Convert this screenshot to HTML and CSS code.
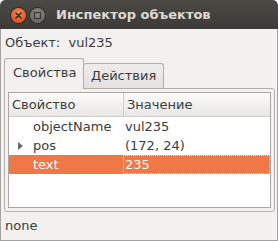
FILE: index.html
```html
<!DOCTYPE html>
<html lang="ru">
<head>
	<meta charset="utf-8">
	<title>Инспектор объектов</title>
	<link rel="stylesheet" href="styles.css">
</head>
<body>
	<div class="window">
		<div class="titlebar">
			<div class="buttons">
				<span class="btn btn-close">
					<svg width="15" height="15" viewBox="0 0 15 15"><path d="M5 5 L10 10 M10 5 L5 10" stroke="#3a2a20" stroke-width="1.6" stroke-linecap="round"/></svg>
				</span>
				<span class="btn btn-max">
					<svg width="15" height="15" viewBox="0 0 15 15"><rect x="4.5" y="4.5" width="6" height="6" fill="none" stroke="#3c3b37" stroke-width="1.3"/></svg>
				</span>
			</div>
			<div class="title">Инспектор объектов</div>
		</div>

		<div class="content">
			<div class="object-line">Объект:&nbsp; vul235</div>

			<div class="tabs">
				<div class="tab active">Свойства</div>
				<div class="tab">Действия</div>
			</div>

			<div class="panel">
				<div class="props">
					<div class="row header">
						<div class="cell name">Свойство</div>
						<div class="cell value">Значение</div>
					</div>
					<div class="row">
						<div class="cell name"><span class="indent"></span>objectName</div>
						<div class="cell value">vul235</div>
					</div>
					<div class="row">
						<div class="cell name"><span class="indent"><span class="arrow"></span></span>pos</div>
						<div class="cell value">(172, 24)</div>
					</div>
					<div class="row selected">
						<div class="cell name"><span class="indent"></span>text</div>
						<div class="cell value focus">235</div>
					</div>
				</div>
			</div>

			<div class="status">none</div>
		</div>
	</div>
</body>
</html>
```

FILE: styles.css
```css
html, body {
	margin: 0;
	padding: 0;
	background-color: #ffffff;
}

body {
	font-family: "DejaVu Sans", sans-serif;
	font-size: 13px;
	color: #3c3c3c;
}

.window {
	width: 278px;
	height: 241px;
	box-sizing: border-box;
	display: flex;
	flex-direction: column;
	border-radius: 5px 5px 0 0;
	overflow: hidden;
	background-color: #f2f1f0;
}

/* Title bar */
.titlebar {
	height: 29px;
	flex: none;
	display: flex;
	align-items: center;
	background: linear-gradient(#4a4944, #3c3b37);
	border-radius: 5px 5px 0 0;
}

.buttons {
	display: flex;
	gap: 4px;
	padding-left: 11px;
	padding-top: 2px;
}

.btn {
	width: 15px;
	height: 15px;
	border-radius: 50%;
	display: block;
}

.btn svg { display: block; }

.btn-close {
	background: radial-gradient(circle at 50% 35%, #f58a5e, #e2541f 70%);
	box-shadow: 0 0 0 1px #2f2e2a;
}

.btn-max {
	background: radial-gradient(circle at 50% 35%, #8f8d87, #6c6a65 70%);
	box-shadow: 0 0 0 1px #2f2e2a;
}

.title {
	margin-left: 11px;
	font-weight: bold;
	font-size: 13px;
	color: #dfdbd2;
	padding-bottom: 1px;
}

/* Body */
.content {
	flex: 1;
	display: flex;
	flex-direction: column;
	border: 1px solid #a5a39f;
	border-top: none;
	padding: 0 2px 0 2px;
}

.object-line {
	height: 28px;
	line-height: 28px;
	padding-left: 2px;
	margin-top: 0;
}

/* Tabs */
.tabs {
	display: flex;
	align-items: flex-end;
	height: 31px;
	padding-left: 1px;
	position: relative;
	z-index: 1;
}

.tab {
	height: 25px;
	line-height: 24px;
	padding: 0 7px;
	box-sizing: border-box;
	border: 1px solid #b3b0ab;
	border-bottom: none;
	border-radius: 3px 3px 0 0;
	background: linear-gradient(#eeedec, #e3e2e0);
	margin-left: -1px;
	width: 81px;
}

.tab.active {
	height: 31px;
	line-height: 28px;
	margin-bottom: -1px;
	background: #f2f1f0;
	width: 80px;
	margin-left: 0;
	padding-left: 8px;
}

.panel {
	height: 124px;
	box-sizing: border-box;
	border: 1px solid #b3b0ab;
	border-radius: 0 3px 3px 3px;
	padding: 3px;
	margin-left: 1px;
}

.props {
	height: 116px;
	box-sizing: border-box;
	border: 1px solid #a9a7a3;
	background: #ffffff;
}

.row {
	display: flex;
	height: 19px;
	line-height: 19px;
}

.row.header {
	height: 24px;
	line-height: 23px;
	background: linear-gradient(#fbfbfa, #e8e7e5);
	border-bottom: 1px solid #cfcdca;
	box-sizing: border-box;
}

.cell.name {
	width: 111px;
	padding-left: 3px;
	display: flex;
}

.header .cell.name {
	border-right: 1px solid #cfcdca;
}

.header .cell.value {
	padding-left: 3px;
}

.cell.value {
	flex: 1;
	padding-left: 2px;
}

.indent {
	width: 21px;
	flex: none;
	display: flex;
	align-items: center;
	padding-left: 6px;
	box-sizing: border-box;
}

.arrow {
	width: 0;
	height: 0;
	border-top: 4px solid transparent;
	border-bottom: 4px solid transparent;
	border-left: 5px solid #6a6a6a;
}

.row.selected {
	background: #f07746;
	color: #ffffff;
}

.cell.focus {
	outline: 1px dotted #ffd9c8;
	outline-offset: -1px;
}

.status {
	flex: 1;
	display: flex;
	align-items: center;
	padding-left: 2px;
	padding-bottom: 1px;
}
```
